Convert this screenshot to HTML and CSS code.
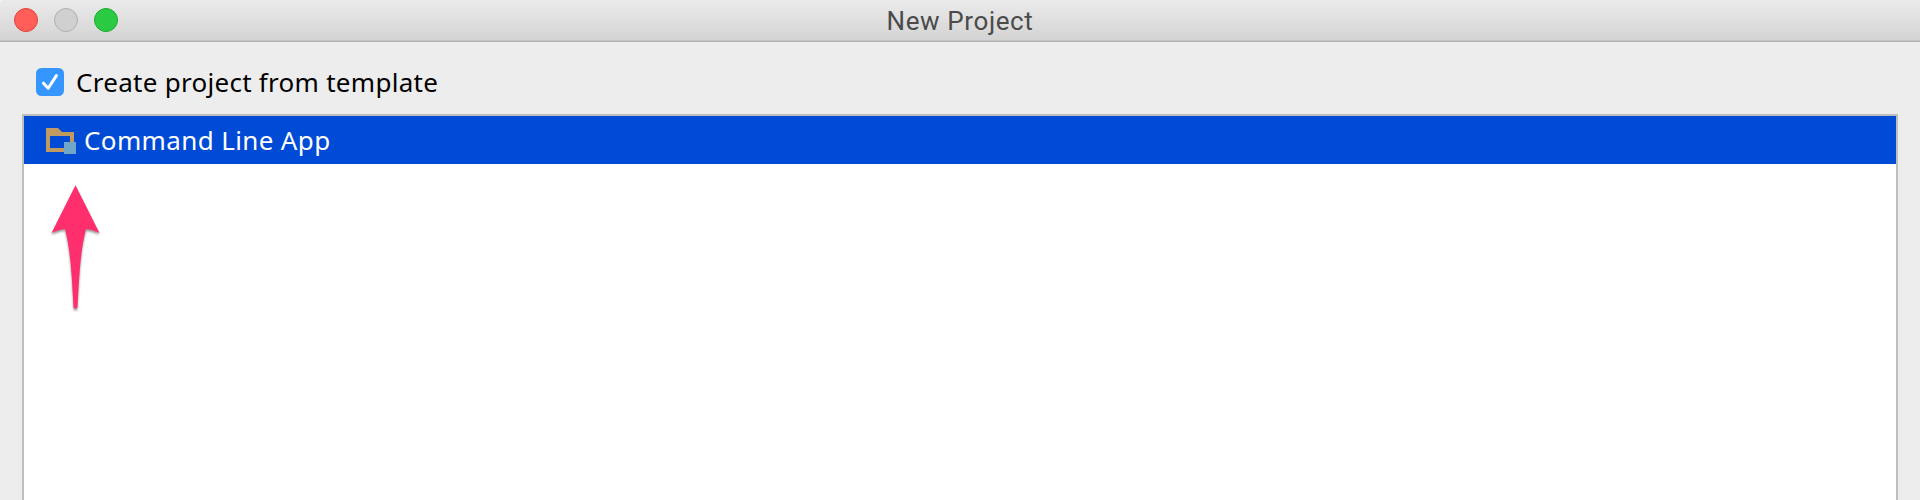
FILE: index.html
```html
<!DOCTYPE html>
<html lang="en">
<head>
<meta charset="utf-8">
<title>New Project</title>
<link rel="stylesheet" href="styles.css">
</head>
<body>
<div class="window">
  <header class="titlebar">
    <div class="controls">
      <span class="control close"></span>
      <span class="control minimize"></span>
      <span class="control zoom"></span>
    </div>
    <h1 class="title">New Project</h1>
  </header>
  <main class="content">
    <div class="option">
      <svg class="checkbox" width="28" height="28" viewBox="0 0 28 28">
        <rect width="28" height="28" rx="5.5" fill="#3596ff"/>
        <path d="M7.500 15.200 12.200 20.200 20.400 7.600" fill="none" stroke="#fff" stroke-width="3" stroke-linecap="round" stroke-linejoin="round"/>
      </svg>
      <span class="option-label">Create project from template</span>
    </div>
    <div class="templates">
      <div class="template selected">
        <svg class="folder" width="30" height="26" viewBox="0 0 30 26">
          <path fill="#c09a60" fill-rule="evenodd" d="M0 0H12L16 4H28V24H0ZM4 8V20H24V8Z"/>
          <rect x="18" y="14" width="12" height="12" fill="#70a7c8"/>
        </svg>
        <span class="template-label">Command Line App</span>
      </div>
      <svg class="arrow" width="60" height="136" viewBox="0 0 60 136">
        <path fill="#ff2f6e" d="M30.500 5.300 54.500 53Q47 49.500 41 49C35 72 34 100 32.500 127Q32.300 128.700 30.500 128.700Q28.700 128.700 28.500 127C27 100 26 72 20 49Q14 49.500 6.500 53Z"/>
      </svg>
    </div>
  </main>
</div>
</body>
</html>
```
FILE: styles.css
```css
* { box-sizing: border-box; }
body { margin: 0; overflow: hidden; background: #fff; }
.window {
  display: flex;
  flex-direction: column;
  height: 500px;
  background: #ededed;
  border-top-left-radius: 3px;
}
.titlebar {
  display: grid;
  grid-template-columns: 1fr auto 1fr;
  height: 42px;
  flex: none;
  border-bottom: 1px solid #afafaf;
  box-shadow: inset 0 -1px 0 #c6c6c6;
  border-top-left-radius: 3px;
  background: linear-gradient(#ebebeb, #d3d3d3);
}
.controls { display: flex; gap: 16px; padding: 8px 0 0 14px; }
.control { width: 24px; height: 24px; border-radius: 50%; border: 1px solid; }
.close { background: #ff5f58; border-color: #df443e; }
.minimize { background: #d0d0d0; border-color: #b0b0b0; }
.zoom { background: #2acb42; border-color: #1dac2b; }
.title {
  margin: 0;
  font: 400 26px/42px Roboto, sans-serif;
  letter-spacing: 0.6px;
  color: #4b4b4b;
}
.content { display: flex; flex-direction: column; flex: 1; padding: 0 22px; }
.option { display: flex; align-items: center; gap: 12px; height: 72px; padding-left: 14px; flex: none; }
.checkbox { margin-top: 8px; }
.option-label {
  margin-top: 7px;
  font: 26px/36px "Noto Sans", sans-serif;
  letter-spacing: 0.28px;
  color: #000;
  white-space: nowrap;
}
.templates { flex: 1; border: 2px solid #bebebe; border-bottom: 0; background: #fff; }
.template { display: flex; height: 48px; padding-left: 22px; gap: 8px; }
.selected { background: #004bd6; color: #fff; }
.folder { margin-top: 12px; flex: none; }
.template-label { font: 26px/48px "Noto Sans", sans-serif; letter-spacing: 0.37px; white-space: nowrap; }
.arrow { display: block; margin: 16px 0 0 21px; filter: drop-shadow(0 2px 1px rgba(0, 0, 0, 0.4)); }
```
